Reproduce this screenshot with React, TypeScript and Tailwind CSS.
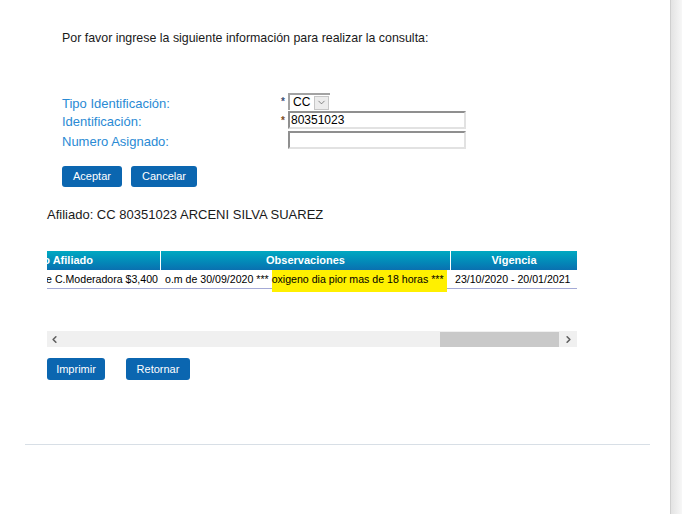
import { ChevronDown, ChevronLeft, ChevronRight } from 'lucide-react'

const labelRow = 'flex items-center'

function Btn({ label, w }: { label: string; w: string }) {
  return (
    <button
      className={`${w} h-[21px] rounded-[3px] bg-[#0b66b0] text-[11px] leading-none text-white`}
    >
      {label}
    </button>
  )
}

export default function App() {
  return (
    <div className="flex h-[514px] w-[682px] overflow-hidden bg-white font-['Liberation_Sans',Arial,sans-serif] text-[#111]">
      <div className="flex-1">
        <p className="ml-[62px] mt-[31px] text-[12.4px] leading-[14px] text-[#1a1a1a]">
          Por favor ingrese la siguiente información para realizar la consulta:
        </p>

        {/* formulario */}
        <div className="ml-[62px] mt-[48px] text-[13px] leading-[15px]">
          <div className={`${labelRow} h-[17px]`}>
            <span className="w-[219px] pt-[3px] text-[#2a8ad4]">Tipo Identificación:</span>
            <span className="w-[7px] text-[10px] font-bold text-[#3b4f75]">*</span>
            <div className="flex h-[17px] w-[42px] items-center border-t-2 border-l-2 border-t-[#a3a3a3] border-l-[#a3a3a3] bg-white">
              <span className="pl-[3px] text-[12px] text-black">CC</span>
              <span className="ml-auto mr-[1px] flex h-[14px] w-[15px] items-center justify-center border border-[#c6c6c6] bg-[#ececec]">
                <ChevronDown size={11} strokeWidth={1.5} className="text-[#555]" />
              </span>
            </div>
          </div>
          <div className={`${labelRow} mt-[1px] h-[18px]`}>
            <span className="w-[219px] pt-[2px] text-[#2a8ad4]">Identificación:</span>
            <span className="w-[7px] text-[10px] font-bold text-[#7a4a22]">*</span>
            <div className="flex h-[18px] w-[178px] items-center border-2 border-t-[#8f8f8f] border-l-[#8f8f8f] border-b-[#e2e2e2] border-r-[#e2e2e2] pl-[1px] text-[12px] text-black">
              80351023
            </div>
          </div>
          <div className={`${labelRow} mt-[2px] h-[18px]`}>
            <span className="w-[226px] pt-[2px] text-[#2a8ad4]">Numero Asignado:</span>
            <div className="h-[18px] w-[178px] border-2 border-t-[#8f8f8f] border-l-[#8f8f8f] border-b-[#e2e2e2] border-r-[#e2e2e2]" />
          </div>
          <div className="mt-[17px] flex gap-[9px]">
            <Btn label="Aceptar" w="w-[60px]" />
            <Btn label="Cancelar" w="w-[66px]" />
          </div>
        </div>

        <p className="ml-[47px] mt-[20px] text-[13px] leading-[16px] text-[#1a1a1a]">
          Afiliado: CC 80351023 ARCENI SILVA SUAREZ
        </p>

        {/* tabla con scroll horizontal */}
        <div className="ml-[47px] mt-[28px] w-[530px]">
          <div className="h-[80px] overflow-hidden">
            <div className="flex h-[19px] bg-gradient-to-b from-[#00a9c1] to-[#0a70b0] text-[11px] font-bold text-white">
              <div className="flex w-[113px] justify-end overflow-hidden whitespace-nowrap pr-[67px] leading-[19px]">
                Tipo Afiliado
              </div>
              <div className="w-[1px] bg-white" />
              <div className="w-[289px] text-center leading-[19px]">Observaciones</div>
              <div className="w-[1px] bg-white" />
              <div className="flex-1 text-center leading-[19px]">Vigencia</div>
            </div>
            <div className="flex h-[19px] border-b border-[#a4aad6] text-[10.6px] text-black">
              <div className="flex w-[114px] justify-end overflow-hidden whitespace-nowrap pr-[3px] leading-[18px]">
                Valor de C.Moderadora $3,400
              </div>
              <div className="w-[290px] whitespace-nowrap pl-[4px] leading-[18px]">
                o.m de 30/09/2020 ***{' '}
                <span className="inline-block h-[22px] bg-[#fff000] pr-[3px] align-top leading-[18px]">
                  oxigeno dia pior mas de 18 horas ***
                </span>
              </div>
              <div className="flex-1 whitespace-nowrap pl-[4px] leading-[18px]">
                23/10/2020 - 20/01/2021
              </div>
            </div>
          </div>
          <div className="flex h-[16px] items-center bg-[#f0f0f0]">
            <ChevronLeft size={11} strokeWidth={3.5} className="ml-[2px] text-[#606060]" />
            <div className="ml-auto h-[15px] w-[119px] bg-[#c9c9c9]" />
            <ChevronRight size={11} strokeWidth={3.5} className="ml-[4px] mr-[3px] text-[#606060]" />
          </div>
        </div>

        <div className="ml-[47px] mt-[11px] flex gap-[21px]">
          <Btn label="Imprimir" w="w-[58px] h-[22px]" />
          <Btn label="Retornar" w="w-[64px] h-[22px]" />
        </div>

        <div className="ml-[25px] mt-[64px] h-[1px] w-[625px] bg-[#d8dfe6]" />
      </div>

      <div className="w-[12px] border-l border-[#cfcfcf] bg-gradient-to-r from-[#e3e3e3] to-[#f7f7f7]" />
    </div>
  )
}
